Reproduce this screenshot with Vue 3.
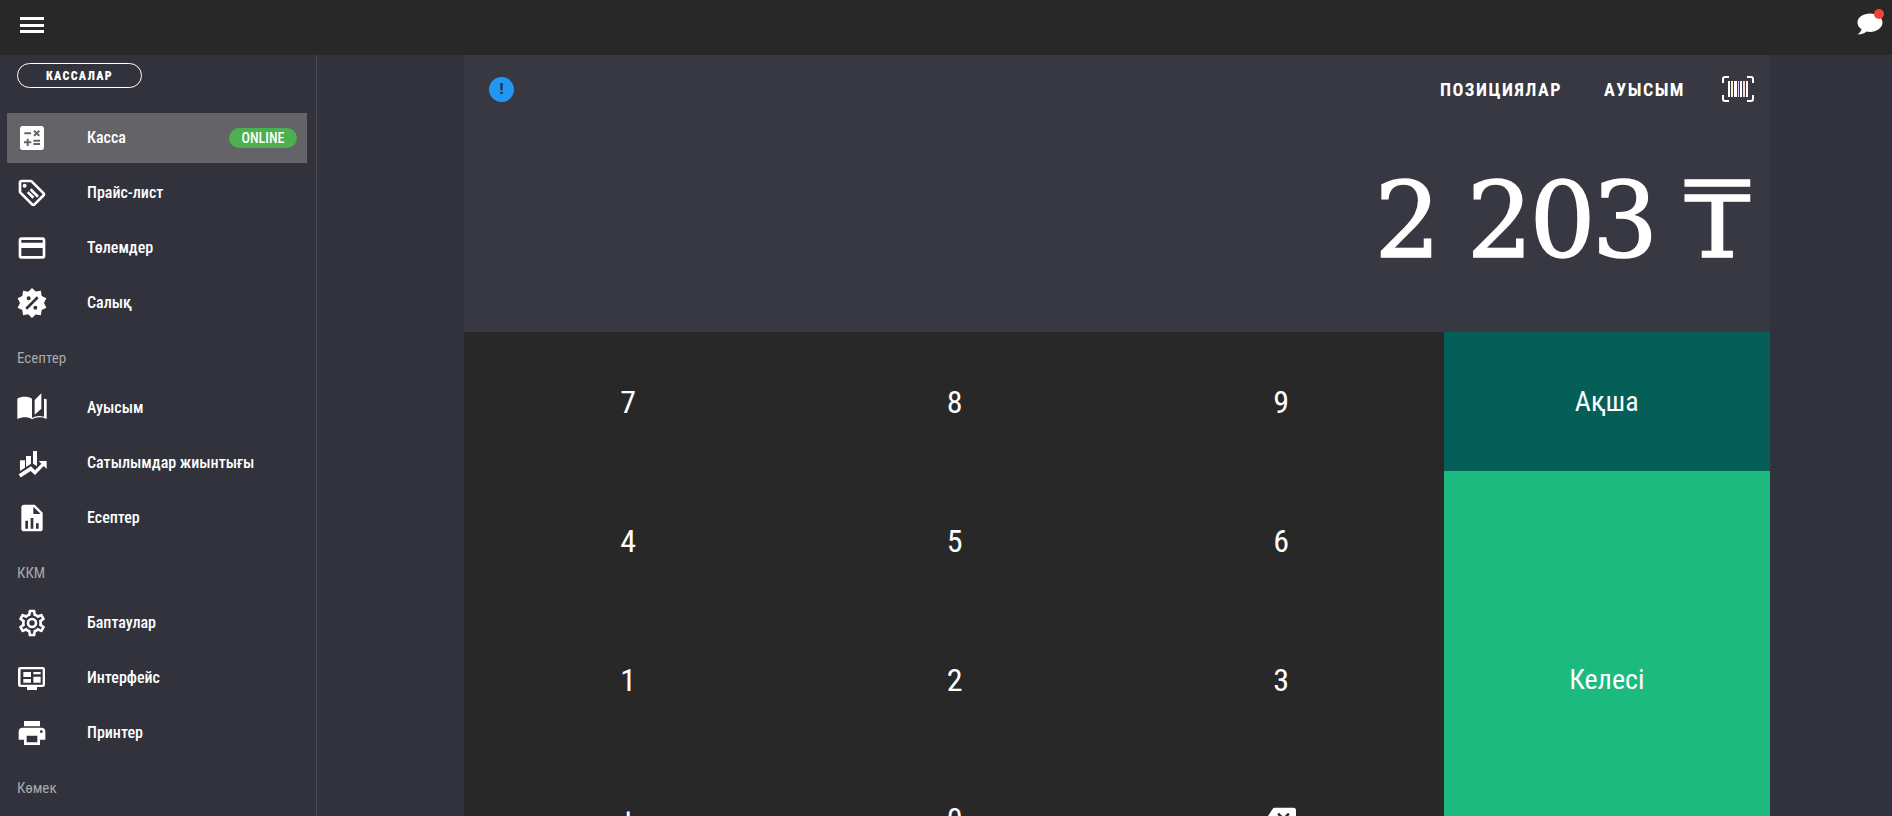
<template>
  <div class="app">
    <header class="topbar">
      <button class="menu-btn" aria-label="menu"><span></span><span></span><span></span></button>
      <div class="chat">
        <svg viewBox="0 0 26 24" width="26" height="24"><path fill="#fff" d="M13 2.5C6.4 2.5 0.5 6 0.5 11.5c0 3 1.800 5.300 4 6.600C4.300 20 2.800 22 0.500 23.500c3.500 0 7-1 9.200-3C10.800 20.800 11.900 20.900 13 20.900c6.600 0 12.500-4 12.500-9.400S19.600 2.500 13 2.500z"/></svg>
        <span class="dot"></span>
      </div>
    </header>

    <div class="body">
      <aside class="sidebar">
        <div class="kassa-btn">КАССАЛАР</div>
        <nav class="nav">
          <template v-for="row in menu" :key="row.label">
            <div v-if="row.section" class="section">{{ row.label }}</div>
            <div v-else class="item" :class="{ active: row.active }">
              <svg class="icon" viewBox="0 0 24 24"><path fill="#fff" fill-rule="evenodd" :d="row.icon" /></svg>
              <span class="label">{{ row.label }}</span>
              <span v-if="row.active" class="badge">ONLINE</span>
            </div>
          </template>
        </nav>
      </aside>

      <main class="panel">
        <section class="display">
          <div class="display-top">
            <span class="alert">!</span>
            <div class="actions">
              <span class="action">ПОЗИЦИЯЛАР</span>
              <span class="action">АУЫСЫМ</span>
              <svg class="barcode" viewBox="0 0 32 26" width="32" height="26">
                <path fill="none" stroke="#fff" stroke-width="2" d="M7 1H3Q1 1 1 3V7M25 1H29Q31 1 31 3V7M7 25H3Q1 25 1 23V19M25 25H29Q31 25 31 23V19" />
                <rect x="6" y="5" width="2" height="16" fill="#fff" />
                <rect x="9" y="5" width="2" height="16" fill="#ffe9c9" />
                <rect x="12" y="5" width="3" height="16" fill="#fff" />
                <rect x="16" y="5" width="1" height="16" fill="#e6c9ff" />
                <rect x="18" y="5" width="2" height="16" fill="#fff" />
                <rect x="21" y="5" width="2" height="16" fill="#ffd7d7" />
                <rect x="24" y="5" width="2" height="16" fill="#fff" />
              </svg>
            </div>
          </div>
          <div class="amount">2 203 ₸</div>
        </section>

        <section class="keypad">
          <div class="keys">
            <div v-for="k in keys" :key="k" class="key">{{ k }}</div>
            <div class="key">
              <svg viewBox="0 0 24 24" width="30" height="30"><path fill="#fff" d="M22,3H7C6.31,3 5.77,3.35 5.41,3.88L0,12L5.41,20.11C5.77,20.64 6.31,21 7,21H22A2,2 0 0,0 24,19V5A2,2 0 0,0 22,3M19,15.59L17.59,17L14,13.41L10.41,17L9,15.59L12.59,12L9,8.41L10.41,7L14,10.59L17.59,7L19,8.41L15.41,12" /></svg>
            </div>
          </div>
          <div class="pay">
            <div class="pay-btn cash">Ақша</div>
            <div class="pay-btn next">Келесі</div>
          </div>
        </section>
      </main>
    </div>
  </div>
</template>

<script setup>
const keys = ['7', '8', '9', '4', '5', '6', '1', '2', '3', '+', '0']

const menu = [
  { label: 'Касса', active: true, icon: 'M19,3H5C3.89,3 3,3.89 3,5V19A2,2 0 0,0 5,21H19A2,2 0 0,0 21,19V5C21,3.89 20.1,3 19,3M13.03,7.06L14.09,6L15.5,7.41L16.91,6L17.97,7.06L16.56,8.47L17.97,9.88L16.91,10.94L15.5,9.53L14.09,10.94L13.03,9.88L14.44,8.47L13.03,7.06M6.25,7.72H11.25V9.22H6.25V7.72M11.5,16H9.5V18H8V16H6V14.5H8V12.5H9.5V14.5H11.5V16M18,17.25H13V15.75H18V17.25M18,14.75H13V13.25H18V14.75Z' },
  { label: 'Прайс-лист', icon: 'M21.41,11.58L12.41,2.58C12.05,2.22 11.55,2 11,2H4C2.9,2 2,2.9 2,4V11C2,11.55 2.22,12.05 2.59,12.41L11.59,21.41C11.95,21.77 12.45,22 13,22C13.55,22 14.05,21.77 14.41,21.41L21.41,14.41C21.78,14.05 22,13.55 22,13C22,12.45 21.77,11.94 21.41,11.58M13,20L4,11V4H11L20,13L13,20M6.5,5A1.5,1.5 0 0,1 8,6.5A1.5,1.5 0 0,1 6.5,8A1.5,1.5 0 0,1 5,6.5A1.5,1.5 0 0,1 6.5,5M10.22,9.93L11.63,8.5L17.19,14.07L15.78,15.5L10.22,9.93M8.09,12.07L9.5,10.64L13.75,14.9L12.34,16.31L8.09,12.07Z' },
  { label: 'Төлемдер', icon: 'M20,4H4C2.89,4 2,4.89 2,6V18A2,2 0 0,0 4,20H20A2,2 0 0,0 22,18V6C22,4.89 21.1,4 20,4M20,6V8H4V6H20M20,12V18H4V12H20Z' },
  { label: 'Салық', icon: 'M18.65,2.85L19.26,6.71L22.77,8.5L21,12L22.78,15.5L19.24,17.29L18.63,21.15L14.74,20.54L11.97,23.3L9.19,20.5L5.33,21.14L4.71,17.25L1.22,15.47L3,11.97L1.23,8.5L4.74,6.69L5.35,2.86L9.22,3.5L12,0.69L14.77,3.46L18.65,2.85M9.5,7A1.5,1.5 0 0,0 8,8.5A1.5,1.5 0 0,0 9.5,10A1.5,1.5 0 0,0 11,8.5A1.5,1.5 0 0,0 9.5,7M14.5,14A1.5,1.5 0 0,0 13,15.5A1.5,1.5 0 0,0 14.5,17A1.5,1.5 0 0,0 16,15.5A1.5,1.5 0 0,0 14.5,14M8.41,17L17,8.41L15.59,7L7,15.59L8.41,17Z' },
  { label: 'Есептер', section: true },
  { label: 'Ауысым', icon: 'M19,1L14,6V17L19,12.5V1M1,5V19.65C1,19.9 1.25,20.15 1.5,20.15C1.6,20.15 1.65,20.1 1.75,20.1C3.1,19.45 5.05,19 6.5,19C8.45,19 10.55,19.4 12,20.5V5C10.55,3.9 8.45,3.5 6.5,3.5C4.55,3.5 2.45,3.9 1,5M21,5V18.5C19.9,18.15 18.7,18 17.5,18C15.8,18 13.35,18.65 12,19.5V20.5C13.35,19.65 15.8,19 17.5,19C19.15,19 20.85,19.3 22.25,20.05C22.35,20.1 22.4,20.1 22.5,20.1C22.75,20.1 23,19.85 23,19.6V5.5C22.4,5.25 21.75,5.1 21,5Z' },
  { label: 'Сатылымдар жиынтығы', icon: 'M3,10H6.750V15.500L3,18ZM7.500,6.750H11.250V12.500L7.500,15ZM12.750,3H15.750V14.500L12.750,12.500ZM2,20.500L11.250,14.500L14.250,17.500L19,12.500L17,10.500H23V16.500L20.800,14.300L14.250,21L11,18L3.500,22.800Z' },
  { label: 'Есептер', icon: 'M13,9H18.5L13,3.5V9M6,2H14L20,8V20A2,2 0 0,1 18,22H6C4.89,22 4,21.1 4,20V4C4,2.89 4.89,2 6,2M7,20H9V14H7V20M11,20H13V12H11V20M15,20H17V16H15V20Z' },
  { label: 'ККМ', section: true },
  { label: 'Баптаулар', icon: 'M12,8A4,4 0 0,1 16,12A4,4 0 0,1 12,16A4,4 0 0,1 8,12A4,4 0 0,1 12,8M12,10A2,2 0 0,0 10,12A2,2 0 0,0 12,14A2,2 0 0,0 14,12A2,2 0 0,0 12,10M10,22C9.75,22 9.54,21.82 9.5,21.58L9.13,18.93C8.5,18.68 7.96,18.34 7.44,17.94L4.95,18.95C4.73,19.03 4.46,18.95 4.34,18.73L2.34,15.27C2.21,15.05 2.27,14.78 2.46,14.63L4.57,12.97L4.5,12L4.57,11L2.46,9.37C2.27,9.22 2.21,8.95 2.34,8.73L4.34,5.27C4.46,5.05 4.73,4.96 4.95,5.05L7.44,6.05C7.96,5.66 8.5,5.32 9.13,5.07L9.5,2.42C9.54,2.18 9.75,2 10,2H14C14.25,2 14.46,2.18 14.5,2.42L14.87,5.07C15.5,5.32 16.04,5.66 16.56,6.05L19.05,5.05C19.27,4.96 19.54,5.05 19.66,5.27L21.66,8.73C21.79,8.95 21.73,9.22 21.54,9.37L19.43,11L19.5,12L19.43,13L21.54,14.63C21.73,14.78 21.79,15.05 21.66,15.27L19.66,18.73C19.54,18.95 19.27,19.04 19.05,18.95L16.56,17.95C16.04,18.34 15.5,18.68 14.87,18.93L14.5,21.58C14.46,21.82 14.25,22 14,22H10M11.25,4L10.88,6.61C9.68,6.86 8.62,7.5 7.85,8.39L5.44,7.35L4.69,8.65L6.8,10.2C6.4,11.37 6.4,12.64 6.8,13.8L4.68,15.36L5.43,16.66L7.86,15.62C8.63,16.5 9.68,17.14 10.87,17.38L11.24,20H12.76L13.13,17.39C14.32,17.14 15.37,16.5 16.14,15.62L18.57,16.66L19.32,15.36L17.2,13.81C17.6,12.64 17.6,11.37 17.2,10.2L19.31,8.65L18.56,7.35L16.15,8.39C15.38,7.5 14.32,6.86 13.12,6.62L12.75,4H11.25Z' },
  { label: 'Интерфейс', icon: 'M3.250,3.750H20A1.750,1.750 0 0,1 21.750,5.500V17A1.750,1.750 0 0,1 20,18.750H15.750V21H8.250V18.750H3.250A1.750,1.750 0 0,1 1.500,17V5.500A1.750,1.750 0 0,1 3.250,3.750M3.400,5.500V17H20V5.500H3.400M5.500,7.500H11.250V11.250H5.500V7.500M13,7.500H18.500V9.250H13V7.500M13,11H18.500V15.500H13V11M5.500,12.750H11.250V15.500H5.500V12.750Z' },
  { label: 'Принтер', icon: 'M18,3H6V7H18V3M19,12A1,1 0 0,1 18,11A1,1 0 0,1 19,10A1,1 0 0,1 20,11A1,1 0 0,1 19,12M16,19H8V14H16V19M19,8H5A3,3 0 0,0 2,11V17H6V21H18V17H22V11A3,3 0 0,0 19,8Z' },
  { label: 'Көмек', section: true },
]
</script>

<style>
html, body {
  margin: 0;
  height: 100%;
  overflow: hidden;
  background: #32323c;
}
</style>

<style scoped>
.app {
  height: 816px;
  overflow: hidden;
  display: flex;
  flex-direction: column;
  font-family: Roboto, "Liberation Sans", sans-serif;
  font-stretch: 75%;
  color: #fff;
  background: #32323c;
}
.topbar {
  height: 55px;
  flex: none;
  background: #282828;
  display: flex;
  align-items: center;
  justify-content: space-between;
  padding: 0 9px 0 20px;
}
.menu-btn {
  width: 24px;
  height: 16px;
  margin: 0 0 5px;
  padding: 0;
  border: 0;
  background: none;
  display: flex;
  flex-direction: column;
  justify-content: space-between;
}
.menu-btn span {
  height: 3px;
  background: #fff;
}
.chat {
  position: relative;
  width: 26px;
  height: 24px;
  margin-bottom: 10px;
}
.chat svg {
  display: block;
}
.dot {
  position: absolute;
  top: -2px;
  right: -1px;
  width: 10px;
  height: 10px;
  border-radius: 50%;
  background: #f44336;
}
.body {
  flex: 1;
  display: flex;
  min-height: 0;
}
.sidebar {
  width: 316px;
  flex: none;
  border-right: 1px solid #4a4a55;
  padding-top: 8px;
}
.kassa-btn {
  width: 125px;
  height: 25px;
  box-sizing: border-box;
  margin-left: 17px;
  border: 1px solid #fff;
  border-radius: 13px;
  font-size: 12px;
  font-weight: 900;
  letter-spacing: 1.3px;
  display: flex;
  align-items: center;
  justify-content: center;
}
.nav {
  margin-top: 25px;
}
.item {
  height: 50px;
  margin: 0 9px 5px 7px;
  padding: 0 10px 0 9px;
  display: flex;
  align-items: center;
  font-size: 16px;
  font-weight: 500;
}
.item.active {
  background: #636368;
}
.icon {
  width: 32px;
  height: 32px;
  flex: none;
}
.label {
  margin-left: 39px;
  padding-bottom: 2px;
  flex: 1;
  white-space: nowrap;
}
.badge {
  width: 68px;
  height: 20px;
  border-radius: 10px;
  background: #4caf50;
  font-size: 14px;
  display: flex;
  align-items: center;
  justify-content: center;
}
.section {
  height: 50px;
  padding-left: 17px;
  display: flex;
  align-items: center;
  font-size: 15px;
  color: #a9a9ad;
}
.panel {
  width: 1306px;
  flex: none;
  margin-left: 147px;
  display: flex;
  flex-direction: column;
}
.display {
  height: 277px;
  flex: none;
  background: #383842;
}
.display-top {
  display: flex;
  align-items: center;
  justify-content: space-between;
  padding: 21px 16px 0 25px;
}
.alert {
  width: 25px;
  height: 25px;
  border-radius: 50%;
  background: #2196f3;
  color: #22304a;
  font-size: 15px;
  font-weight: 900;
  display: flex;
  align-items: center;
  justify-content: center;
}
.actions {
  display: flex;
  align-items: center;
}
.action {
  font-size: 18px;
  font-weight: 700;
  letter-spacing: 1.5px;
  margin-right: 42px;
}
.action + .action {
  margin-right: 37px;
}
.barcode {
  display: block;
}
.amount {
  margin-top: 54px;
  padding-right: 23px;
  text-align: right;
  font-family: "DejaVu Serif", serif;
  font-stretch: normal;
  font-size: 104px;
  line-height: 130px;
  letter-spacing: -3.5px;
  -webkit-text-stroke: 1.5px #fff;
}
.keypad {
  flex: 1;
  display: flex;
  background: #282828;
  min-height: 0;
}
.keys {
  flex: 3;
  display: grid;
  grid-template-columns: repeat(3, 1fr);
  grid-auto-rows: 139px;
}
.key {
  display: flex;
  align-items: center;
  justify-content: center;
  padding-left: 2px;
  font-size: 32px;
}
.pay {
  flex: 1;
  display: flex;
  flex-direction: column;
}
.pay-btn {
  display: flex;
  align-items: center;
  justify-content: center;
  font-size: 28px;
  flex: none;
}
.cash {
  height: 139px;
  background: #055e57;
}
.next {
  height: 417px;
  background: #1dba7f;
}
</style>
